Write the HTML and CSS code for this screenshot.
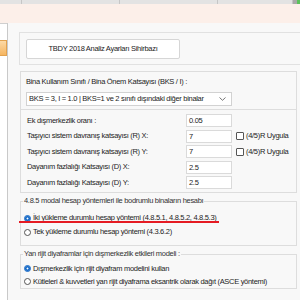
FILE: index.html
```html
<!DOCTYPE html>
<html lang="tr">
  <head>
    <meta charset="utf-8">
    <title>Analiz Ayarları</title>
    <link rel="stylesheet" href="styles.css">
  </head>
  <body>
    <div class="app">
      <div class="topbar">
        <div class="seg seg-a"></div>
        <div class="seg seg-b"></div>
        <div class="seg seg-b"></div>
        <div class="seg seg-c"></div>
        <div class="seg-dark"></div>
        <div class="seg-green"></div>
      </div>
      <div class="ribbon"></div>

      <div class="main">
        <aside class="sidebar">
          <div class="side-btn"></div>
        </aside>

        <section class="content">
          <div class="wizard">
            <div class="wizard-btn">TBDY 2018 Analiz Ayarları Sihirbazı</div>
          </div>

          <div class="groups">
            <div class="box">
              <div class="box-top">
                <div class="label">Bina Kullanım Sınıfı / Bina Önem Katsayısı (BKS / I) :</div>
                <div class="select">
                  <span>BKS = 3, I = 1.0 | BKS=1 ve 2 sınıfı dışındaki diğer binalar</span>
                  <svg class="chevron" width="7" height="4" viewBox="0 0 7 4"><path d="M0.5 0.5 L3.5 3.3 L6.5 0.5" fill="none" stroke="#666" stroke-width="0.9"/></svg>
                </div>
              </div>
              <div class="box-rows">
                <div class="row">
                  <span>Ek dışmerkezlik oranı :</span>
                  <div class="input">0.05</div>
                </div>
                <div class="row">
                  <span>Taşıyıcı sistem davranış katsayısı (R) X:</span>
                  <div class="input">7</div>
                  <label class="check"><span class="checkbox"></span>(4/5)R Uygula</label>
                </div>
                <div class="row">
                  <span>Taşıyıcı sistem davranış katsayısı (R) Y:</span>
                  <div class="input">7</div>
                  <label class="check"><span class="checkbox"></span>(4/5)R Uygula</label>
                </div>
                <div class="row">
                  <span>Dayanım fazlalığı Katsayısı (D) X:</span>
                  <div class="input">2.5</div>
                </div>
                <div class="row">
                  <span>Dayanım fazlalığı Katsayısı (D) Y:</span>
                  <div class="input">2.5</div>
                </div>
              </div>
            </div>

            <fieldset class="group group-modal">
              <legend>4.8.5 modal hesap yöntemleri ile bodrumlu binaların hesabı</legend>
              <div class="option"><span class="radio checked"></span>İki yükleme durumlu hesap yöntemi (4.8.5.1, 4.8.5.2, 4.8.5.3)</div>
              <div class="option"><span class="radio"></span>Tek yükleme durumlu hesap yöntemi (4.3.6.2)</div>
            </fieldset>

            <fieldset class="group group-diaphragm">
              <legend>Yan rijit diyaframlar için dışmerkezlik etkileri modeli :</legend>
              <div class="option"><span class="radio checked"></span>Dışmerkezlik için rijit diyafram modelini kullan</div>
              <div class="option"><span class="radio"></span>Kütleleri &amp; kuvvetleri yan rijit diyaframa eksantrik olarak dağıt (ASCE yöntemi)</div>
            </fieldset>
          </div>
        </section>
      </div>

      <div class="markup"></div>
    </div>
  </body>
</html>
```

FILE: styles.css
```css
body {
    margin: 0;
    font: 7.5px/10px "Liberation Sans", Arial, sans-serif;
    letter-spacing: -0.3px;
    color: #1c1c1c;
}
.app {
    position: relative;
    width: 300px;
    height: 300px;
    overflow: hidden;
    display: flex;
    flex-direction: column;
}
.topbar {
    height: 4px;
    background: #e3e3e3;
    display: flex;
}
.seg {
    border-right: 1px solid #c6c6c6;
}
.seg-a { width: 21px; }
.seg-b { width: 97px; }
.seg-c { width: 74px; }
.seg-dark {
    width: 4px;
    background: #a9a9a9;
}
.seg-green {
    flex: 1;
    background: #5cc25c;
}
.ribbon {
    height: 19px;
    background: #fcefe9;
}
.main {
    flex: 1;
    display: flex;
}
.sidebar {
    width: 7px;
    background: #fff;
    border-top: 1px solid #cfcfcf;
    border-right: 1px solid #c9c9c9;
    padding-top: 16px;
}
.side-btn {
    height: 14px;
    background: linear-gradient(#fcd9a6, #f5b560);
    border: 1px solid #e2a24f;
    border-left: none;
}
.content {
    flex: 1;
    background: #f8f8f8;
    padding: 9px 0 0 11px;
}
.wizard {
    border: 1px solid #e1e1e1;
    border-right: none;
    padding: 6px 0 5px 6px;
}
.wizard-btn {
    width: 154px;
    height: 20px;
    box-sizing: border-box;
    background: #fff;
    border: 1px solid #d6d6d6;
    border-radius: 2px;
    display: flex;
    align-items: center;
    justify-content: center;
}
.groups {
    margin: 6px 3px 0 1px;
}
.box {
    border: 1px solid #dddddd;
}
.box-top {
    padding: 5px 0 3px 5px;
    border-bottom: 1px solid #dddddd;
}
.label {
    margin-bottom: 5px;
}
.select {
    width: 206px;
    height: 14px;
    box-sizing: border-box;
    background: #fff;
    border: 1px solid #d2d2d2;
    padding: 0 5px 0 2px;
    display: flex;
    align-items: center;
    justify-content: space-between;
}
.box-rows {
    padding: 4px 0 3px 6px;
    display: flex;
    flex-direction: column;
    gap: 2.5px;
}
.row {
    display: grid;
    grid-template-columns: 159px 46px auto;
    align-items: center;
    height: 13px;
}
.input {
    height: 13px;
    box-sizing: border-box;
    background: #fff;
    border: 1px solid #dadada;
    padding-left: 2px;
    line-height: 11px;
}
.check {
    display: flex;
    align-items: center;
    margin-left: 4px;
}
.checkbox {
    width: 6px;
    height: 6px;
    border: 1px solid #555;
    border-radius: 1px;
    background: #fff;
    margin-right: 2px;
}
.group {
    margin: 0;
    padding: 0 0 0 2px;
    border: 1px solid #dddddd;
    min-width: 0;
}
.group legend {
    padding: 0 1px;
    color: #333;
}
.group-modal {
    margin-top: 3px;
    padding-top: 5px;
    padding-bottom: 6px;
}
.group-diaphragm {
    margin-top: 3px;
    padding-top: 3px;
    padding-bottom: 0;
}
.option {
    display: flex;
    align-items: center;
    height: 14px;
}
.group-diaphragm .option {
    height: 13px;
}
.radio {
    width: 5px;
    height: 5px;
    border: 1px solid #555;
    border-radius: 50%;
    background: #fff;
    margin: 0 2px 0 1px;
}
.radio.checked {
    border-color: #0b62c4;
    background: #fff;
    box-shadow: inset 0 0 0 1.5px #0b62c4;
}
.markup {
    position: absolute;
    left: 19px;
    top: 221px;
    width: 200px;
    height: 2px;
    background: #e51b23;
}
```
